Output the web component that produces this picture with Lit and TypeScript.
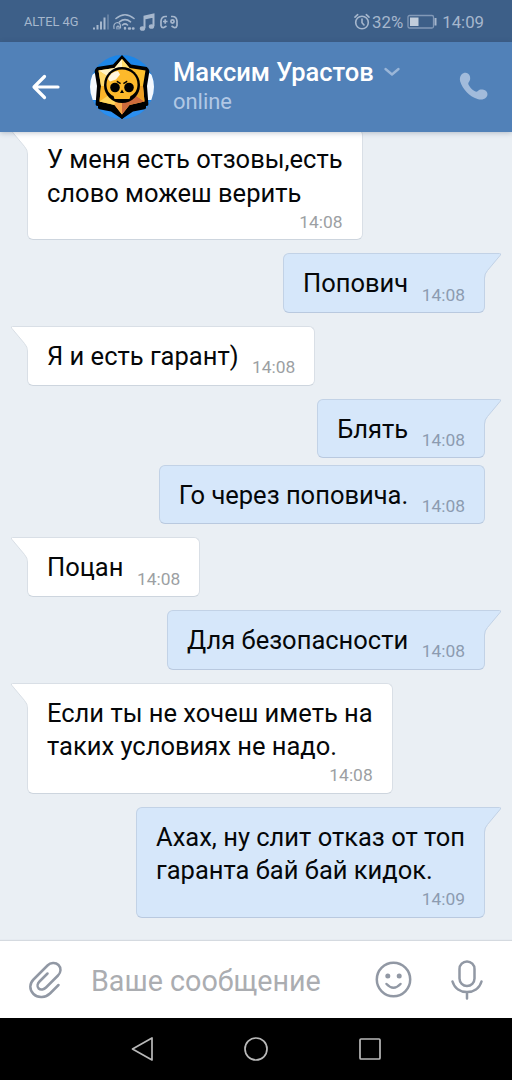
import { LitElement, html, svg, css } from "lit";
import { customElement, property } from "lit/decorators.js";
import { classMap } from "lit/directives/class-map.js";

interface Message {
  lines: string[];
  time: string;
  out?: boolean;
  tail?: boolean;
}

const MESSAGES: Message[] = [
  { lines: ["У меня есть отзовы,есть", "слово можеш верить"], time: "14:08", tail: true },
  { lines: ["Попович"], time: "14:08", out: true, tail: true },
  { lines: ["Я и есть гарант)"], time: "14:08", tail: true },
  { lines: ["Блять"], time: "14:08", out: true, tail: true },
  { lines: ["Го через поповича."], time: "14:08", out: true },
  { lines: ["Поцан"], time: "14:08", tail: true },
  { lines: ["Для безопасности"], time: "14:08", out: true, tail: true },
  { lines: ["Если ты не хочеш иметь на", "таких условиях не надо."], time: "14:08", tail: true },
  { lines: ["Ахах, ну слит отказ от топ", "гаранта бай бай кидок."], time: "14:09", out: true, tail: true },
];

@customElement("status-bar")
class StatusBar extends LitElement {
  static styles = css`
    :host {
      display: flex;
      align-items: center;
      height: 42px;
      padding: 1px 28px 0 24px;
      box-sizing: border-box;
      background: #3d5f88;
      color: #a6b7cd;
      font-size: 16.8px;
    }
    .carrier {
      font-size: 12.8px;
      width: 68px;
      white-space: nowrap;
    }
    .icons {
      flex: 1;
    }
    .clock {
      margin-left: 5px;
    }
    .alarm {
      margin-right: 2px;
    }
    .battery {
      margin-left: 4px;
    }
    svg {
      display: block;
    }
  `;

  render() {
    return html`
      <span class="carrier">ALTEL 4G</span>
      <svg class="icons" width="90" height="20" viewBox="0 0 90 20" preserveAspectRatio="xMinYMid meet" fill="none" stroke="#a6b7cd">
        <g stroke-width="2">
          <path d="M2 17.5v-2M5.5 17.5v-4.5M9 17.5v-8M12.5 17.5v-12" />
          <path d="M16 17.5v-15" opacity=".35" />
        </g>
        <g stroke-width="1.6" stroke-linecap="round">
          <path d="M24 6.5q9-7.500 18 0M27.500 9.800q5.500-4.500 11 0M30.500 13q2.500-2.200 5 0" />
          <path d="M22 16.500q-1-5.500 3.500-6 3.500.5 3 5.500M25 17q-.5-3 1-3 1.500 0 1 3" stroke-width="1.200" />
          <path d="M33 16v.5M37 16.500h1M41 16.500h.5" stroke-width="2.400" />
        </g>
        <path d="M52.500 16V4.500l9-2v11.500M52.500 6.500l9-2" stroke-width="2" />
        <g fill="#a6b7cd" stroke="none">
          <ellipse cx="50.500" cy="16.500" rx="2.700" ry="2.300" />
          <ellipse cx="59.500" cy="14.500" rx="2.700" ry="2.300" />
        </g>
        <g stroke-width="1.700">
          <path d="M75 4.500h-1.500q-4 0-4.500 4.500v4.500q.5 2.500 3 2l2.500-1.500M79 4.500h1.500q4 0 4.500 4.500v4.500q-.5 2.500-3 2l-2.500-1.500" />
          <path d="M71 9.500h4.500M73.200 7.200v4.600" />
          <circle cx="80.500" cy="9.500" r="1.600" />
        </g>
      </svg>
      <svg class="alarm" width="16" height="18" viewBox="0 0 16 18" fill="none" stroke="#a6b7cd" stroke-width="1.600" stroke-linecap="round">
        <circle cx="8" cy="9.500" r="6.300" />
        <path d="M8 6v3.700l2 2.300M1 4.200 3.700 1.700M15 4.200l-2.700-2.500" />
      </svg>
      <span>32%</span>
      <svg class="battery" width="30" height="16" viewBox="0 0 30 16">
        <rect x="1" y="1.500" width="25.500" height="12.500" rx="1.500" fill="none" stroke="#8299b7" stroke-width="1.300" />
        <rect x="3" y="3.500" width="8.500" height="8.500" fill="#c2cddb" />
        <path d="M28.500 4v7.500" stroke="#a6b7cd" stroke-width="2" />
      </svg>
      <span class="clock">14:09</span>
    `;
  }
}

@customElement("chat-header")
class ChatHeader extends LitElement {
  static styles = css`
    :host {
      display: flex;
      align-items: center;
      height: 90px;
      padding: 0 23px 0 31px;
      box-sizing: border-box;
      background: #5181b8;
      position: relative;
      z-index: 1;
      box-shadow: 0 1px 5px rgba(40, 60, 90, 0.28);
    }
    svg {
      display: block;
      flex: none;
    }
    .avatar {
      margin-left: 29px;
    }
    .who {
      flex: 1;
      padding: 0 0 1px 19px;
    }
    .name {
      display: flex;
      align-items: center;
      gap: 10px;
      color: #fff;
      font-size: 25.5px;
      font-weight: 500;
      line-height: 30px;
      white-space: nowrap;
    }
    .status {
      color: #b1c8e5;
      font-size: 21.9px;
      line-height: 29px;
    }
    .call {
      margin-bottom: 3px;
    }
  `;

  render() {
    return html`
      <svg width="30" height="28" viewBox="0 0 30 28" fill="none" stroke="#fff" stroke-width="3.200" stroke-linecap="round" stroke-linejoin="round">
        <path d="M27 14H3.500M13.500 3.500 3 14l10.500 10.500" />
      </svg>
      <svg class="avatar" width="64" height="64" viewBox="0 0 64 64">
        <defs>
          <clipPath id="round"><circle cx="32" cy="32" r="32" /></clipPath>
        </defs>
        <g clip-path="url(#round)">
          <rect width="64" height="64" fill="#1c86e8" />
          <path d="M0 21 10 15h44l10 6v24H0z" fill="#f4f8fd" />
          <path d="M0 64V46h64v18z" fill="#2b8ff0" />
          <path d="M8 46h48v8l-13 2.500L32 64 21 56.500 8 54z" fill="#000" />
          <path d="M32 0 41 9.500 60 12.500 57 31 58.500 50.500 42 54.500 32 64 22 54.500 5.500 50.500 7 31 4 12.500 23 9.500z" fill="#000" />
          <path d="M32 4 39.500 13 55.500 15.500 53 31 54.500 46.500 39.500 50 32 59.500 24.500 50 9.500 46.500 11 31 8.500 15.500 24.500 13z" fill="#fdbf2d" />
          <path d="M32 4 24.500 13 8.500 15.500 32 31z" fill="#fff3c4" />
          <path d="M32 4 39.500 13 32 31z" fill="#ffdf70" />
          <path d="M8.500 15.500 11 31 32 31z" fill="#ffd96a" />
          <path d="M11 31 9.500 46.500 32 31z" fill="#fbb52a" />
          <path d="M9.500 46.500 24.500 50 32 31z" fill="#ffd45c" />
          <path d="M32 31 54.500 46.500 39.500 50 32 59.500z" fill="#cf6b3c" />
          <path d="M32 31 24.500 50 32 59.500z" fill="#f9a94a" />
          <path d="M32 31 53 31 54.500 46.500z" fill="#ef9f24" />
          <circle cx="32" cy="30" r="18" fill="#000" />
          <path d="M32 14.500C23 14.500 16.500 21 16.500 29.500c0 5 2.200 9.500 7 11.500l1 3h15l1-3c4.800-2 7-6.500 7-11.500C47.500 21 41 14.500 32 14.500z" fill="#fdb92b" />
          <path d="M18 24q3-7.500 10-8l2 3.500-4 5-6 2z" fill="#fff" opacity=".85" />
          <g fill="#000">
            <circle cx="25" cy="32.500" r="4.800" />
            <circle cx="39" cy="32.500" r="4.800" />
            <path d="m27 25.500 4 2.500-.8 1.200L26.500 27zM37 25.500 33 28l.8 1.200L37.500 27zM32 34.500l2 3.500h-4z" />
          </g>
        </g>
      </svg>
      <div class="who">
        <div class="name">
          <span>Максим Урастов</span>
          <svg width="16" height="10" viewBox="0 0 16 10" fill="none" stroke="#9ab6d8" stroke-width="2.300" stroke-linecap="round" stroke-linejoin="round">
            <path d="m1.500 2 6.500 5.500L14.500 2" />
          </svg>
        </div>
        <div class="status">online</div>
      </div>
      <svg class="call" width="30" height="30" viewBox="0 0 30 30" fill="#a2bbdb">
        <path d="M2.500 3.600C5 .6 9.800 1 10.900 5.200c.6 2.600.3 4-1 5.700-.9 1.200-.8 2 .1 3.500 1.500 2.600 3.200 4.200 5.500 5.600 1.500.9 2.300.9 3.400-.1 1.600-1.300 3.200-1.700 5.700-1.100 4.100 1.100 5 5.300 2.500 7.700-2.200 2.100-5.200 2.700-8.600 1.500C9.900 25 3.600 17.800 1.200 10.400.5 7.800.9 5.500 2.500 3.600z" />
      </svg>
    `;
  }
}

@customElement("chat-message")
class ChatMessage extends LitElement {
  @property({ attribute: false }) message!: Message;

  static styles = css`
    :host {
      display: flex;
    }
    .bubble {
      --fill: #fff;
      --line: #d9dfe6;
      position: relative;
      display: flex;
      gap: 13.5px;
      box-sizing: border-box;
      padding: 12.9px 19px 7.4px;
      background: var(--fill);
      border: 1px solid var(--line);
      border-bottom-color: #cdd5de;
      border-radius: 6px;
    }
    .bubble.out {
      --fill: #d6e7fa;
      --line: #c2d2e6;
      border-bottom-color: #b9c9df;
      margin-left: auto;
    }
    .text {
      color: #050709;
      font-size: 25.5px;
      line-height: 33.3px;
      padding-bottom: 3.9px;
      white-space: pre-line;
    }
    .time {
      align-self: flex-end;
      color: #9c9fa3;
      font-size: 17.4px;
      line-height: 20px;
    }
    .out .time {
      color: #8c9bb0;
    }
    .multi {
      flex-direction: column;
      gap: 0;
    }
    .multi .text {
      padding-bottom: 1.9px;
    }
    .tail {
      position: absolute;
      top: -1px;
      left: -18px;
      transform: scaleX(-1);
    }
    .out .tail {
      left: auto;
      right: -18px;
      transform: none;
    }
    .tail-fill {
      fill: var(--fill);
    }
    .tail-line {
      fill: none;
      stroke: var(--line);
    }
  `;

  render() {
    const { lines, time, out, tail } = this.message;
    const classes = { bubble: true, out: !!out, multi: lines.length > 1 };
    return html`
      <div class=${classMap(classes)}>
        ${tail
          ? html`<svg class="tail" width="23" height="26" viewBox="0 0 23 26">
              <path class="tail-fill" d="M0 .5H20.500Q22.500.5 21.300 2.200L8.500 17.500Q6 20.500 6 25V26H0z" />
              <path class="tail-line" d="M0 .5H20.500Q22.500.5 21.300 2.200L8.500 17.500Q5.500 20.800 5.500 25V26" />
            </svg>`
          : null}
        <div class="text">${lines.join("\n")}</div>
        <div class="time">${time}</div>
      </div>
    `;
  }
}

@customElement("message-composer")
class MessageComposer extends LitElement {
  static styles = css`
    :host {
      display: flex;
      align-items: center;
      height: 77px;
      padding: 0 29px 0 28px;
      box-sizing: border-box;
      background: #fff;
      box-shadow: 0 -1px 1px #d5dae0;
      position: relative;
    }
    svg {
      display: block;
      fill: none;
      stroke: #9198a4;
      stroke-width: 2.500;
      stroke-linecap: round;
      stroke-linejoin: round;
    }
    .placeholder {
      flex: 1;
      padding: 3px 0 0 28px;
      color: #abadb1;
      font-size: 28.7px;
      white-space: nowrap;
    }
    .mic {
      margin-left: 39px;
    }
    .dot {
      fill: #9198a4;
      stroke: none;
    }
  `;

  render() {
    return html`
      <svg width="35" height="40" viewBox="0 0 35 40">
        <path d="M30.500 25 22 33.500C18 37.500 10 38.500 5.500 34 1 29.500 1.500 23.500 5.500 19.500L19.500 5.500C22.500 2.500 27.500 2 30.500 5c3 3 2.500 7.500-.5 10.500L18 27.500c-2 2-5.300 3-7.300 1-2-2-1.200-5 .8-7l8-8" />
      </svg>
      <div class="placeholder">Ваше сообщение</div>
      <svg width="37" height="37" viewBox="0 0 37 37">
        <circle cx="18.500" cy="18.500" r="16.700" />
        <path d="M11.500 23q7 7.500 14 0" />
        <circle class="dot" cx="12.800" cy="15" r="2.500" />
        <circle class="dot" cx="24.200" cy="15" r="2.500" />
      </svg>
      <svg class="mic" width="32" height="40" viewBox="0 0 32 40">
        <rect x="8.500" y="1.500" width="15" height="24.500" rx="7.500" />
        <path d="M1.500 21.500c2 7 8 10.500 14.500 10.500s12.500-3.500 14.500-10.500M16 32v6.500" />
      </svg>
    `;
  }
}

@customElement("nav-bar")
class NavBar extends LitElement {
  static styles = css`
    :host {
      display: flex;
      align-items: center;
      justify-content: center;
      gap: 88px;
      height: 62px;
      background: #000;
    }
    svg {
      fill: none;
      stroke: #b9b9b9;
      stroke-width: 1.700;
      stroke-linejoin: round;
    }
  `;

  render() {
    const shapes = [
      svg`<path d="M23 2v22L3.500 13z" />`,
      svg`<circle cx="13" cy="13" r="11" />`,
      svg`<rect x="3" y="3" width="20" height="20" rx="1" />`,
    ];
    return shapes.map((s) => html`<svg width="26" height="26" viewBox="0 0 26 26">${s}</svg>`);
  }
}

@customElement("app-root")
class AppRoot extends LitElement {
  static styles = css`
    :host {
      display: flex;
      flex-direction: column;
      height: 1080px;
      overflow: hidden;
      background: #eaeff4;
      font-family: Roboto, "Noto Sans", sans-serif;
    }
    .messages {
      flex: 1;
      min-height: 0;
      display: flex;
      flex-direction: column;
      justify-content: flex-end;
      gap: 13.2px;
      padding: 0 27px 23.5px;
      overflow: hidden;
    }
    .grouped {
      margin-top: -6.6px;
    }
  `;

  render() {
    return html`
      <status-bar></status-bar>
      <chat-header></chat-header>
      <div class="messages">
        ${MESSAGES.map(
          (m) => html`<chat-message class=${classMap({ grouped: !m.tail })} .message=${m}></chat-message>`
        )}
      </div>
      <message-composer></message-composer>
      <nav-bar></nav-bar>
    `;
  }
}
